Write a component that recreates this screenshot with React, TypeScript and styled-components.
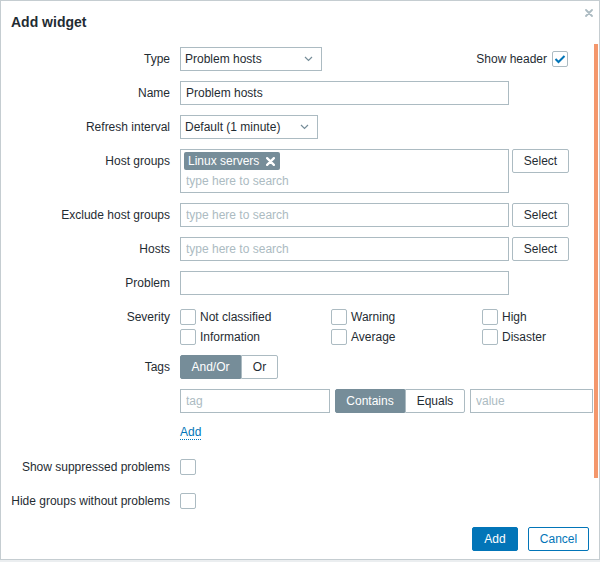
import React, {useState} from "react";
import styled, {createGlobalStyle} from "styled-components";

const GlobalStyle = createGlobalStyle`
  html, body {
    margin: 0;
    padding: 0;
    background: #ebeef0;
  }
  body {
    font-family: "Liberation Sans", Arial, sans-serif;
    font-size: 12px;
    color: #1f2c33;
  }
  * {
    box-sizing: border-box;
  }
`;

const Dialog = styled.div`
  position: relative;
  width: 600px;
  height: 560px;
  background: #fff;
  border: 1px solid #c5cdd1;
  display: flex;
  flex-direction: column;
`;

const Header = styled.div`
  height: 42px;
  padding: 0 10px;
  display: flex;
  align-items: center;
`;

const Title = styled.h4`
  margin: 0;
  font-size: 14px;
  font-weight: bold;
  color: #1f2c33;
`;

const CloseButton = styled.button`
  position: absolute;
  top: 8px;
  right: 6px;
  width: 8px;
  height: 8px;
  padding: 0;
  border: 0;
  background: none;
  display: flex;
`;

const Body = styled.div`
  position: relative;
  flex: 1;
  overflow: hidden;
  padding: 4px 0 0 9px;
`;

const ScrollThumb = styled.div`
  position: absolute;
  top: 1px;
  right: 1px;
  width: 4px;
  height: 434px;
  background: #f4976c;
`;

const Form = styled.div`
  display: grid;
  grid-template-columns: 160px max-content;
  column-gap: 10px;
  row-gap: 10px;
`;

const Label = styled.label`
  line-height: 24px;
  text-align: right;
  white-space: nowrap;
`;

const Field = styled.div`
  display: flex;
  align-items: flex-start;
  gap: 3px;
`;

const SpreadField = styled.div`
  width: 388px;
  display: flex;
  align-items: center;
  justify-content: space-between;
`;

const InlineCheck = styled.label`
  display: flex;
  align-items: center;
  gap: 5px;
`;

const SelectBox = styled.div<{$width: number}>`
  width: ${(p) => p.$width}px;
  height: 24px;
  padding: 0 8px 0 4px;
  border: 1px solid #acbbc2;
  display: flex;
  align-items: center;
  justify-content: space-between;
`;

const TextInput = styled.input<{$width: number}>`
  width: ${(p) => p.$width}px;
  height: 24px;
  padding: 0 5px;
  border: 1px solid #acbbc2;
  border-radius: 0;
  font-family: inherit;
  font-size: 12px;
  color: #1f2c33;
  outline: none;
  flex-shrink: 0;

  &::placeholder {
    color: #acbbc2;
  }
`;

const Multiselect = styled.div`
  width: 329px;
  height: 44px;
  padding: 2px 3px;
  border: 1px solid #acbbc2;
  display: flex;
  flex-direction: column;
  gap: 2px;
`;

const Chip = styled.span`
  align-self: flex-start;
  height: 18px;
  padding: 0 5px 0 4px;
  border-radius: 2px;
  background: #768d99;
  color: #fff;
  display: flex;
  align-items: center;
  gap: 7px;
`;

const MultiInput = styled.input`
  border: 0;
  padding: 0 2px;
  height: 18px;
  font-family: inherit;
  font-size: 12px;
  outline: none;

  &::placeholder {
    color: #acbbc2;
  }
`;

const Button = styled.button<{$width: number}>`
  width: ${(p) => p.$width}px;
  height: 24px;
  padding: 0;
  border: 1px solid #acbbc2;
  border-radius: 2px;
  background: #fff;
  font-family: inherit;
  font-size: 12px;
  color: #1f2c33;
  flex-shrink: 0;
`;

const Checkbox = styled.span`
  width: 16px;
  height: 16px;
  border: 1px solid #acbbc2;
  border-radius: 2px;
  background: #fff;
  display: flex;
  align-items: center;
  justify-content: center;
  flex-shrink: 0;
`;

const CheckField = styled.div`
  height: 24px;
  display: flex;
  align-items: center;
`;

const SeverityGrid = styled.div`
  display: grid;
  grid-template-columns: repeat(3, 151px);
  grid-auto-rows: 20px;
  padding-top: 2px;
  margin-bottom: -2px;
`;

const SeverityItem = styled.label`
  display: flex;
  align-items: center;
  gap: 4px;
`;

const Segmented = styled.div`
  display: flex;
  flex-shrink: 0;
`;

const Segment = styled.button<{$active?: boolean; $width: number}>`
  width: ${(p) => p.$width}px;
  height: 24px;
  padding: 0;
  font-family: inherit;
  font-size: 12px;
  border: 1px solid ${(p) => (p.$active ? "#768d99" : "#acbbc2")};
  background: ${(p) => (p.$active ? "#768d99" : "#fff")};
  color: ${(p) => (p.$active ? "#fff" : "#1f2c33")};
  border-radius: 0;

  &:first-child {
    border-radius: 2px 0 0 2px;
  }
  &:last-child {
    border-radius: 0 2px 2px 0;
  }
`;

const TagsBlock = styled.div`
  display: flex;
  flex-direction: column;
  gap: 10px;
`;

const TagRow = styled.div`
  display: flex;
  gap: 5px;
`;

const AddLink = styled.a`
  align-self: flex-start;
  margin-top: 2px;
  line-height: 14px;
  color: #0275b8;
  text-decoration: none;
  border-bottom: 1px dotted #0275b8;
  margin-bottom: 5px;
`;

const Footer = styled.div`
  padding: 9px 10px 8px;
  display: flex;
  justify-content: flex-end;
  gap: 10px;
`;

const FooterButton = styled.button<{$primary?: boolean; $width: number}>`
  width: ${(p) => p.$width}px;
  height: 24px;
  padding: 0;
  border: 1px solid #0275b8;
  border-radius: 2px;
  background: ${(p) => (p.$primary ? "#0275b8" : "#fff")};
  color: ${(p) => (p.$primary ? "#fff" : "#0275b8")};
  font-family: inherit;
  font-size: 12px;
`;

const Chevron = () => (
  <svg width="9" height="6" viewBox="0 0 9 6">
    <polyline points="1,1 4.5,4.5 8,1" fill="none" stroke="#768d99" strokeWidth="1.2" />
  </svg>
);

const Tick = () => (
  <svg width="12" height="10" viewBox="0 0 12 10">
    <polyline points="1.5,5 4.5,8 10.5,2" fill="none" stroke="#0275b8" strokeWidth="2" />
  </svg>
);

const Cross = ({size, color, width}: {size: number; color: string; width: number}) => (
  <svg width={size} height={size} viewBox="0 0 8 8">
    <path d="M1 1 L7 7 M7 1 L1 7" stroke={color} strokeWidth={width} strokeLinecap="round" />
  </svg>
);

const severities = ["Not classified", "Warning", "High", "Information", "Average", "Disaster"];

const Check = ({checked}: {checked?: boolean}) => <Checkbox>{checked && <Tick />}</Checkbox>;

const App: React.FC = () => {
  const [andOr, setAndOr] = useState(true);
  const [contains, setContains] = useState(true);

  return (
    <>
      <GlobalStyle />
      <Dialog>
        <Header>
          <Title>Add widget</Title>
        </Header>
        <CloseButton aria-label="Close">
          <Cross size={8} color="#acbbc2" width={1.8} />
        </CloseButton>
        <Body>
          <ScrollThumb />
          <Form>
            <Label>Type</Label>
            <SpreadField>
              <SelectBox $width={142}>
                Problem hosts
                <Chevron />
              </SelectBox>
              <InlineCheck>
                Show header
                <Check checked />
              </InlineCheck>
            </SpreadField>

            <Label>Name</Label>
            <Field>
              <TextInput $width={329} defaultValue="Problem hosts" />
            </Field>

            <Label>Refresh interval</Label>
            <Field>
              <SelectBox $width={138}>
                Default (1 minute)
                <Chevron />
              </SelectBox>
            </Field>

            <Label>Host groups</Label>
            <Field>
              <Multiselect>
                <Chip>
                  Linux servers
                  <Cross size={9} color="#fff" width={2} />
                </Chip>
                <MultiInput placeholder="type here to search" />
              </Multiselect>
              <Button $width={57}>Select</Button>
            </Field>

            <Label>Exclude host groups</Label>
            <Field>
              <TextInput $width={329} placeholder="type here to search" />
              <Button $width={57}>Select</Button>
            </Field>

            <Label>Hosts</Label>
            <Field>
              <TextInput $width={329} placeholder="type here to search" />
              <Button $width={57}>Select</Button>
            </Field>

            <Label>Problem</Label>
            <Field>
              <TextInput $width={329} />
            </Field>

            <Label>Severity</Label>
            <SeverityGrid>
              {severities.map((s) => (
                <SeverityItem key={s}>
                  <Check />
                  {s}
                </SeverityItem>
              ))}
            </SeverityGrid>

            <Label>Tags</Label>
            <TagsBlock>
              <Segmented>
                <Segment $width={61} $active={andOr} onClick={() => setAndOr(true)}>
                  And/Or
                </Segment>
                <Segment $width={37} $active={!andOr} onClick={() => setAndOr(false)}>
                  Or
                </Segment>
              </Segmented>
              <TagRow>
                <TextInput $width={150} placeholder="tag" />
                <Segmented>
                  <Segment $width={70} $active={contains} onClick={() => setContains(true)}>
                    Contains
                  </Segment>
                  <Segment $width={60} $active={!contains} onClick={() => setContains(false)}>
                    Equals
                  </Segment>
                </Segmented>
                <TextInput $width={123} placeholder="value" />
              </TagRow>
              <AddLink href="#">Add</AddLink>
            </TagsBlock>

            <Label>Show suppressed problems</Label>
            <CheckField>
              <Check />
            </CheckField>

            <Label>Hide groups without problems</Label>
            <CheckField>
              <Check />
            </CheckField>
          </Form>
        </Body>
        <Footer>
          <FooterButton $primary $width={46}>
            Add
          </FooterButton>
          <FooterButton $width={61}>Cancel</FooterButton>
        </Footer>
      </Dialog>
    </>
  );
};

export default App;
